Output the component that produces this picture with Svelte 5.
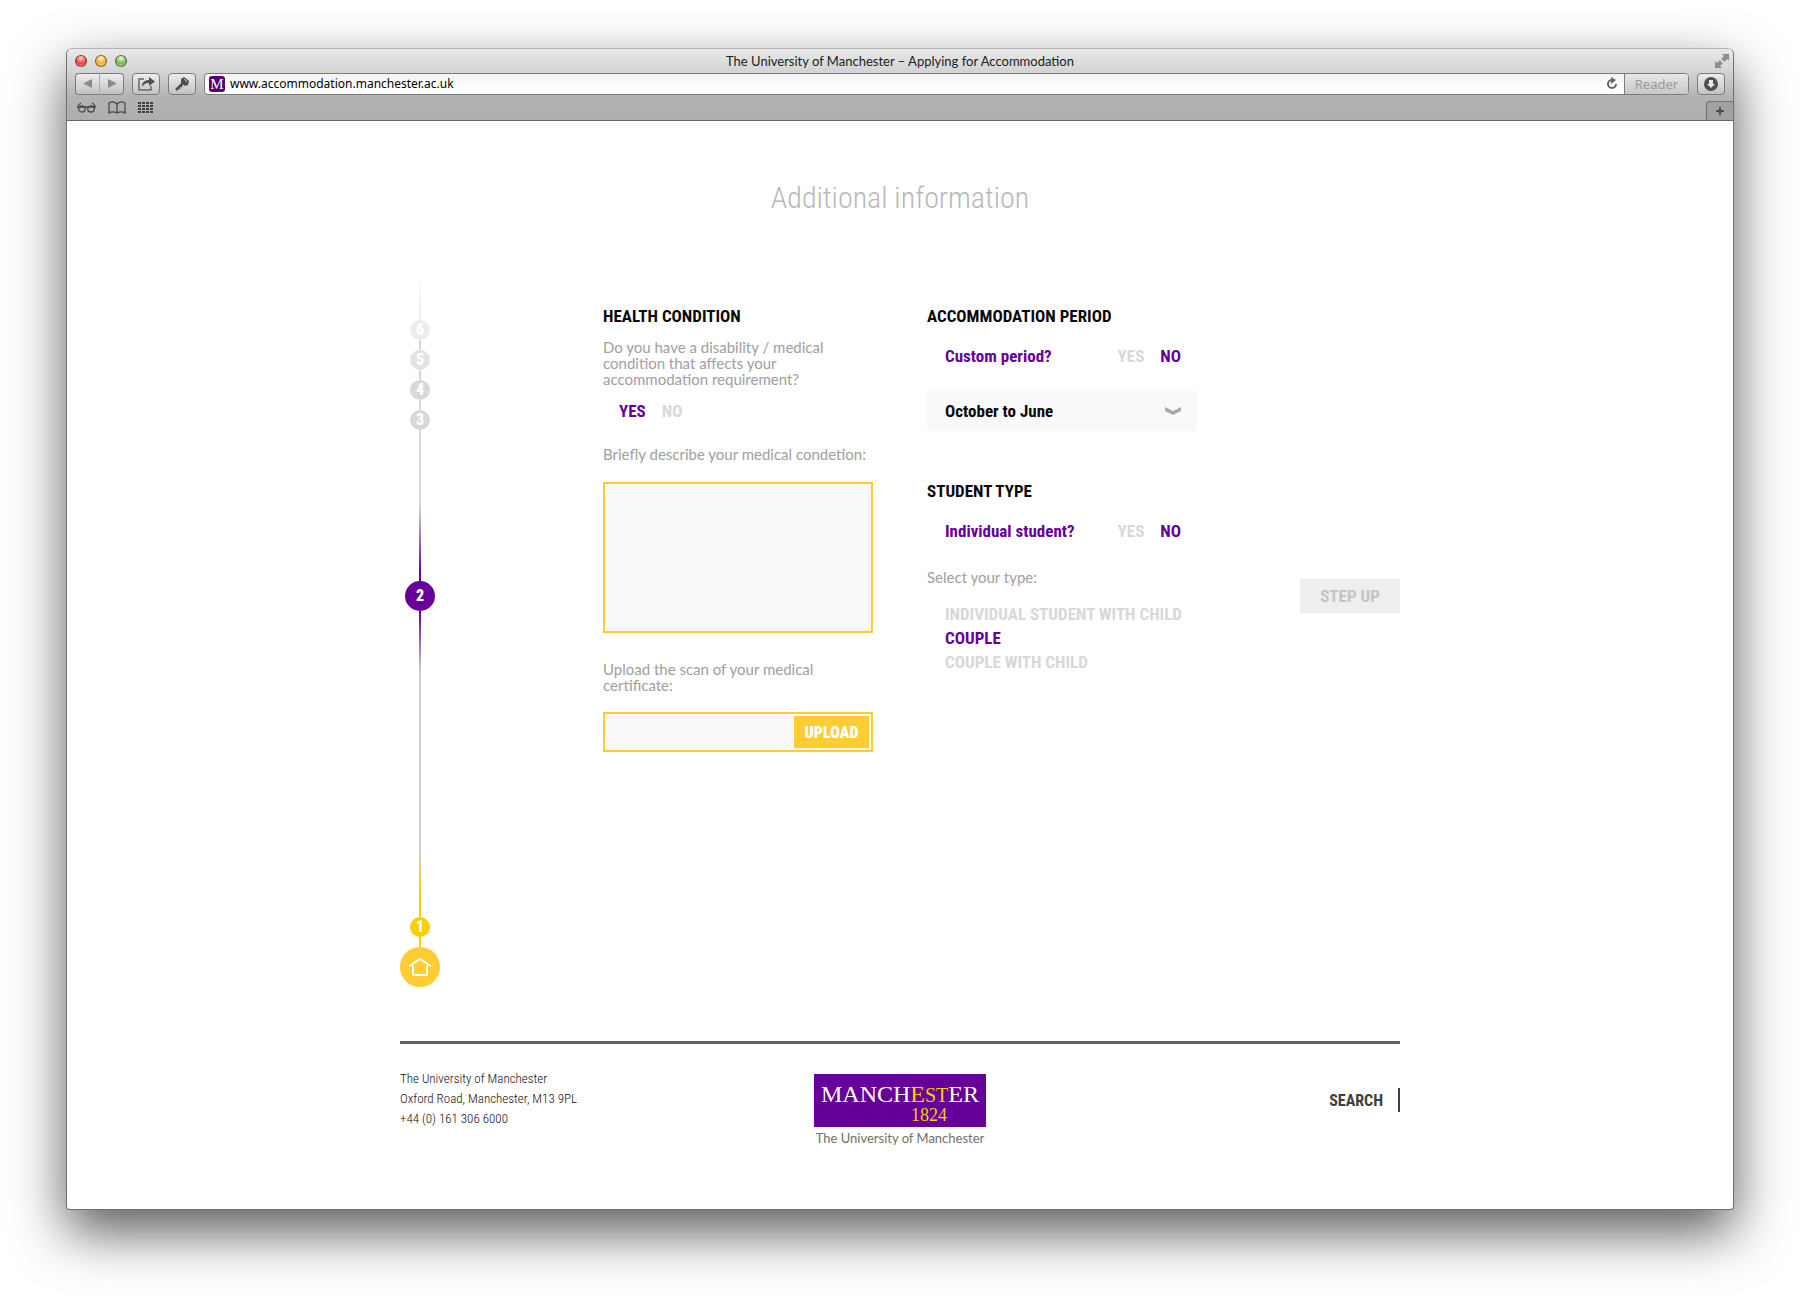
<script lang="ts">
	/**
	 * Accommodation application, step 2: additional information
	 * Shown inside a desktop browser window
	 */

	let address = $state('www.accommodation.manchester.ac.uk');
	let disability = $state('yes');
	let customPeriod = $state('no');
	let individual = $state('no');
	let studentType = $state('couple');
	let period = $state('October to June');

	const upcoming = [6, 5, 4, 3];

	const studentTypes = [
		{ value: 'single-child', label: 'INDIVIDUAL STUDENT WITH CHILD' },
		{ value: 'couple', label: 'COUPLE' },
		{ value: 'couple-child', label: 'COUPLE WITH CHILD' }
	];
</script>

<div class="window">
	<header class="chrome">
		<div class="titlebar">
			<div class="lights">
				<button class="light" data-kind="close" aria-label="Close"></button>
				<button class="light" data-kind="minimise" aria-label="Minimise"></button>
				<button class="light" data-kind="zoom" aria-label="Zoom"></button>
			</div>
			<span class="window-title">The University of Manchester – Applying for Accommodation</span>
			<button class="plain fullscreen" aria-label="Full screen">
				<svg width="16" height="16" viewBox="0 0 16 16" fill="#8c8c8c">
					<path d="M8 1h7v7l-2-2-3 3-3-3 3-3zM1 8l2 2 3-3 3 3-3 3 2 2H1z" />
					<path d="M5 5l6 6" stroke="#dedede" stroke-width="2" />
				</svg>
			</button>
		</div>

		<div class="toolbar">
			<div class="history">
				<button class="tool" aria-label="Back">
					<svg width="10" height="10" viewBox="0 0 10 10"><path d="M9 0v9L0 4.500z" fill="#8b8b8b" /></svg>
				</button>
				<button class="tool" aria-label="Forward">
					<svg width="10" height="10" viewBox="0 0 10 10"><path d="M1 0v9l9-4.500z" fill="#8b8b8b" /></svg>
				</button>
			</div>
			<button class="tool" aria-label="Share">
				<svg width="17" height="14" viewBox="0 0 17 14">
					<path d="M6 2H1v11h12V9" fill="none" stroke="#666" stroke-width="1.500" />
					<path d="M4 10c0-4 2-7 7-7V0l6 4.500L11 9V6c-4 0-5 1.500-7 4z" fill="#505050" />
				</svg>
			</button>
			<button class="tool" aria-label="Passwords">
				<svg width="16" height="16" viewBox="0 0 16 16">
					<path d="M9 7l-7 7" stroke="#505050" stroke-width="2.500" />
					<path d="M4 11l2 2M6 9l2 2" stroke="#505050" stroke-width="1.500" />
					<path d="M7 3l3-2 5 4-1 4-3 1-4-3z" fill="#505050" />
					<path d="M10 3l3 3" stroke="#ccc" />
				</svg>
			</button>
			<div class="address">
				<span class="favicon" aria-hidden="true">M</span>
				<input type="text" aria-label="Address" bind:value={address} />
				<button class="plain" aria-label="Reload">
					<svg width="12" height="14" viewBox="0 0 12 14">
						<path d="M10 7a4 4 0 1 1-4-4" fill="none" stroke="#666" stroke-width="2" />
						<path d="M5 0l5 3-5 4z" fill="#666" />
					</svg>
				</button>
				<button class="reader" disabled>Reader</button>
			</div>
			<button class="tool" aria-label="Downloads">
				<svg width="14" height="14" viewBox="0 0 14 14">
					<circle cx="7" cy="7" r="7" fill="#505050" />
					<path d="M5 3h4v4h2l-4 4-4-4h2z" fill="#e8e8e8" />
				</svg>
			</button>
		</div>

		<div class="bookmarks">
			<button class="plain" aria-label="Reading list">
				<svg width="19" height="11" viewBox="0 0 19 11" fill="none" stroke="#484848" stroke-width="1.300">
					<ellipse cx="5" cy="7" rx="3.300" ry="3" />
					<ellipse cx="14" cy="7" rx="3.300" ry="3" />
					<path d="M0 5h19M1 5c0-2 1-3 3-4M18 5c0-2-1-3-3-4" />
				</svg>
			</button>
			<button class="plain" aria-label="Bookmarks">
				<svg width="18" height="13" viewBox="0 0 18 13" fill="none" stroke="#484848" stroke-width="1.300">
					<path d="M9 3C7 1 4 0 1 2v10c3-2 6-1 8 0 2-1 5-2 8 0V2c-3-2-6-1-8 1zM9 3v9" />
				</svg>
			</button>
			<button class="plain" aria-label="Top sites">
				<svg width="15" height="11" viewBox="0 0 15 11" stroke="#404040" stroke-width="2" stroke-dasharray="3 1">
					<path d="M0 1h15M0 4h15M0 7h15M0 10h15" />
				</svg>
			</button>
			<button class="new-tab" aria-label="New tab">
				<svg width="8" height="8" viewBox="0 0 8 8"><path d="M4 0v8M0 4h8" stroke="#505050" stroke-width="2" /></svg>
			</button>
		</div>
	</header>

	<main class="page">
		<h1>Additional information</h1>

		<div class="columns">
			<nav class="timeline" aria-label="Steps">
				<span class="line line--fade"></span>
				{#each upcoming as step}
					<a href="#step-{step}" class="step" data-step={step}>{step}</a>
					{#if step !== 3}
						<span class="line line--short"></span>
					{/if}
				{/each}
				<span class="line line--before"></span>
				<a href="#step-2" class="step step--current" aria-current="step">2</a>
				<span class="line line--after"></span>
				<a href="#step-1" class="step step--done">1</a>
				<span class="line line--short line--done"></span>
				<a href="#home" class="step step--home" aria-label="Home">
					<svg width="24" height="20" viewBox="0 0 24 20" fill="none" stroke="#fff" stroke-width="2">
						<path d="M2 8.500L12 2l10 6.500" stroke-linecap="round" />
						<path d="M5 8.500V18h14V8.500" stroke-linejoin="round" />
					</svg>
				</a>
			</nav>

			<section class="column">
				<h2>HEALTH CONDITION</h2>
				<fieldset class="question">
					<legend>Do you have a disability / medical condition that affects your accommodation requirement?</legend>
					<div class="answers answers--indent">
						<label><input type="radio" name="disability" value="yes" bind:group={disability} />YES</label>
						<label><input type="radio" name="disability" value="no" bind:group={disability} />NO</label>
					</div>
				</fieldset>

				<label class="hint" for="condition">Briefly describe your medical condetion:</label>
				<textarea id="condition"></textarea>

				<label class="hint hint--wrap" for="certificate">Upload the scan of your medical certificate:</label>
				<div class="upload">
					<input type="text" id="certificate" />
					<button>UPLOAD</button>
				</div>
			</section>

			<section class="column">
				<h2>ACCOMMODATION PERIOD</h2>
				<div class="row" role="radiogroup" aria-labelledby="period-label">
					<span id="period-label">Custom period?</span>
					<div class="answers">
						<label><input type="radio" name="custom" value="yes" bind:group={customPeriod} />YES</label>
						<label><input type="radio" name="custom" value="no" bind:group={customPeriod} />NO</label>
					</div>
				</div>
				<div class="select">
					<select aria-label="Period" bind:value={period}>
						<option>October to June</option>
					</select>
					<svg width="16" height="8" viewBox="0 0 16 8"><path d="M0 0l8 4 8-4v4L8 8 0 4z" fill="#a8a8a8" /></svg>
				</div>

				<h2>STUDENT TYPE</h2>
				<div class="row" role="radiogroup" aria-labelledby="student-label">
					<span id="student-label">Individual student?</span>
					<div class="answers">
						<label><input type="radio" name="individual" value="yes" bind:group={individual} />YES</label>
						<label><input type="radio" name="individual" value="no" bind:group={individual} />NO</label>
					</div>
				</div>
				<fieldset class="types">
					<legend>Select your type:</legend>
					{#each studentTypes as type}
						<label><input type="radio" name="type" value={type.value} bind:group={studentType} />{type.label}</label>
					{/each}
				</fieldset>
			</section>

			<button class="step-up">STEP UP</button>
		</div>

		<footer>
			<address>
				The University of Manchester<br />
				Oxford Road, Manchester, M13 9PL<br />
				+44 (0) 161 306 6000
			</address>
			<a class="brand" href="#manchester">
				<span class="brand__mark">
					<span class="brand__name">MANCH<b>E<small>ST</small></b>ER</span>
					<span class="brand__year">1824</span>
				</span>
				<span class="brand__text">The University of Manchester</span>
			</a>
			<input class="search" type="text" placeholder="SEARCH" aria-label="Search" />
		</footer>
	</main>
</div>

<style>
	:global(body) {
		background: #fff;
		--cond: 'Roboto Condensed', 'Liberation Sans Narrow', 'Liberation Sans', sans-serif;
		--text: Lato, 'Open Sans', sans-serif;
		--purple: #609;
		--yellow: #fc3;
		--muted: #d8d8d8;
	}

	.window {
		margin: 48px 66px 91px;
		border: 1px solid #707070;
		border-top-color: #b4b4b4;
		border-radius: 6px 6px 4px 4px;
		box-shadow: 0 22px 54px rgba(0, 0, 0, 0.65);
		background: #fff;
		overflow: hidden;
		font-family: var(--cond);
	}

	button,
	input,
	select,
	textarea {
		box-sizing: border-box;
		margin: 0;
		padding: 0;
		border: 0;
		border-radius: 0;
		background: none;
		font: inherit;
		color: inherit;
		outline: none;
	}

	a {
		color: inherit;
		text-decoration: none;
	}

	svg {
		display: block;
	}

	/* Browser chrome */
	.chrome {
		border-bottom: 1px solid #666;
		background: linear-gradient(#e9e9e9, #d2d2d2 24px, #b3b3b3 48px, #adadad);
	}

	.titlebar {
		display: grid;
		grid-template-columns: 1fr auto 1fr;
		align-items: center;
		height: 24px;
		padding: 0 8px;
	}

	.lights {
		display: flex;
		gap: 8px;
	}

	.light {
		width: 12px;
		height: 12px;
		border: 1px solid rgba(60, 30, 20, 0.6);
		border-radius: 50%;
	}

	.light[data-kind='close'] {
		background: radial-gradient(circle at 50% 20%, #fcc, #e8453f 60%, #f99);
	}

	.light[data-kind='minimise'] {
		background: radial-gradient(circle at 50% 20%, #fff0c0, #f0ac38 60%, #ffe08a);
	}

	.light[data-kind='zoom'] {
		background: radial-gradient(circle at 50% 20%, #e4ffd0, #72b84c 60%, #c4f09a);
	}

	.window-title {
		font-family: var(--text);
		font-size: 13px;
		color: #222;
	}

	.fullscreen {
		justify-self: end;
		margin-right: -5px;
	}

	.plain {
		display: grid;
		place-items: center;
	}

	.toolbar {
		display: flex;
		gap: 8px;
		padding: 0 8px;
	}

	.tool {
		display: grid;
		place-items: center;
		width: 28px;
		height: 22px;
		border: 1px solid #7c7c7c;
		border-radius: 4px;
		background: linear-gradient(#ededed, #c2c2c2);
	}

	.history {
		display: flex;
	}

	.history .tool {
		width: 24px;
	}

	.history .tool:first-child {
		border-right: 0;
		border-radius: 4px 0 0 4px;
	}

	.history .tool:last-child {
		width: 25px;
		border-left-color: #aaa;
		border-radius: 0 4px 4px 0;
	}

	.address {
		display: flex;
		flex: 1;
		align-items: center;
		box-sizing: border-box;
		height: 22px;
		padding-left: 4px;
		border: 1px solid #7c7c7c;
		border-radius: 4px;
		background: linear-gradient(#f2f2f2, #fff 12px);
		overflow: hidden;
	}

	.favicon {
		width: 16px;
		border-radius: 3px;
		background: #507;
		color: #fff;
		font: 15px/16px 'Liberation Serif', serif;
		text-align: center;
	}

	.address input {
		flex: 1;
		padding-left: 5px;
		font-family: 'Noto Sans', sans-serif;
		font-size: 12px;
		line-height: 20px;
		color: #000;
	}

	.reader {
		width: 64px;
		height: 22px;
		margin-left: 6px;
		border-left: 1px solid #7c7c7c;
		background: linear-gradient(#e9e9e9, #c6c6c6);
		color: #999;
		font-family: 'Noto Sans', sans-serif;
		font-size: 13px;
	}

	.bookmarks {
		display: flex;
		align-items: center;
		gap: 12px;
		height: 25px;
		padding-left: 10px;
	}

	.new-tab {
		display: grid;
		place-items: center;
		align-self: end;
		width: 27px;
		height: 19px;
		margin-left: auto;
		border: 1px solid #707070;
		border-width: 1px 0 0 1px;
		border-radius: 4px 0 0;
		background: #a2a2a2;
	}

	/* Page */
	.page {
		max-width: 1000px;
		margin: 0 auto;
	}

	h1 {
		margin: 0;
		padding-top: 55px;
		font-size: 30px;
		font-weight: 300;
		line-height: 44px;
		text-align: center;
		color: #b8b8b8;
	}

	.columns {
		display: grid;
		grid-template-columns: 149px 270px 270px 1fr;
		column-gap: 54px;
		align-items: start;
		padding-top: 50px;
	}

	.column {
		padding-top: 36px;
	}

	h2 {
		margin: 0;
		font-size: 17px;
		font-weight: 700;
		line-height: 20px;
		color: #0a0a0a;
	}

	/* Timeline */
	.timeline {
		display: flex;
		flex-direction: column;
		align-items: center;
		width: 40px;
	}

	.line {
		width: 2px;
		background: #d8d8d8;
	}

	.line--fade {
		height: 50px;
		background: linear-gradient(#fff, #ececec);
	}

	.line--short {
		height: 10px;
	}

	.line--before {
		height: 151px;
		background: linear-gradient(#d8d8d8 50%, #609 95%);
	}

	.line--after {
		height: 306px;
		background: linear-gradient(#609, #d0d0d0 20%, #d0d0d0 78%, #fc0 93%);
	}

	.line--done {
		background: #fc0;
	}

	.step {
		display: grid;
		place-items: center;
		width: 20px;
		height: 20px;
		border-radius: 50%;
		background: #d8d8d8;
		color: #fff;
		font-size: 16px;
		font-weight: 900;
		line-height: 20px;
	}

	.step[data-step='6'] {
		background: #ececec;
	}

	.step[data-step='5'] {
		background: #e2e2e2;
	}

	.step--current {
		width: 30px;
		height: 30px;
		background: var(--purple);
	}

	.step--done {
		background: #fc0;
	}

	.step--home {
		width: 40px;
		height: 40px;
		background: var(--yellow);
	}

	/* Form */
	fieldset {
		min-width: 0;
		margin: 0;
		padding: 0;
		border: 0;
	}

	legend,
	.hint {
		display: block;
		padding: 0;
		font-family: var(--text);
		font-size: 15px;
		line-height: 16px;
		color: #a0a0a0;
	}

	.question {
		margin-top: 13px;
	}

	.question legend {
		width: 230px;
	}

	.answers {
		display: flex;
		gap: 16px;
	}

	.answers--indent {
		padding: 14px 0 0 16px;
	}

	.answers label,
	.types label {
		font-size: 17px;
		font-weight: 700;
		line-height: 20px;
		color: var(--muted);
		cursor: pointer;
	}

	.answers label:has(:checked),
	.types label:has(:checked) {
		color: var(--purple);
	}

	input[type='radio'] {
		position: absolute;
		opacity: 0;
		pointer-events: none;
	}

	.question + .hint {
		margin-top: 25px;
	}

	textarea {
		display: block;
		width: 100%;
		height: 151px;
		margin-top: 20px;
		padding: 8px;
		border: 2px solid var(--yellow);
		background: #f9f9f9;
		resize: none;
	}

	.hint--wrap {
		width: 230px;
		margin-top: 28px;
	}

	.upload {
		display: flex;
		box-sizing: border-box;
		height: 40px;
		margin-top: 19px;
		padding: 2px;
		border: 2px solid var(--yellow);
		background: #f9f9f9;
	}

	.upload input {
		flex: 1;
		min-width: 0;
	}

	.upload button {
		width: 75px;
		background: var(--yellow);
		color: #fff;
		font-size: 16px;
		font-weight: 900;
	}

	.row {
		display: flex;
		justify-content: space-between;
		margin-top: 20px;
		padding: 0 16px 0 18px;
		font-size: 17px;
		font-weight: 700;
		line-height: 20px;
		color: var(--purple);
	}

	.select {
		display: grid;
		align-items: center;
		margin: 25px 0 50px;
		background: #f9f9f9;
	}

	.select select,
	.select svg {
		grid-area: 1 / 1;
	}

	.select select {
		height: 40px;
		padding-left: 18px;
		appearance: none;
		font-size: 17px;
		font-weight: 700;
		color: #0a0a0a;
	}

	.select svg {
		justify-self: end;
		margin-right: 16px;
		pointer-events: none;
	}

	.types {
		display: flex;
		flex-direction: column;
		margin-top: 28px;
	}

	.types legend {
		margin-bottom: 17px;
	}

	.types label {
		padding-left: 18px;
		line-height: 24px;
	}

	.step-up {
		justify-self: end;
		width: 100px;
		height: 34px;
		margin-top: 309px;
		background: #eee;
		color: #c4c4c4;
		font-size: 17px;
		font-weight: 700;
	}

	/* Footer */
	footer {
		display: grid;
		grid-template-columns: 1fr auto 1fr;
		align-items: start;
		margin-top: 54px;
		padding: 25px 0 60px;
		border-top: 3px solid #606060;
		color: #404040;
	}

	address {
		font-size: 13px;
		font-style: normal;
		font-weight: 300;
		line-height: 20px;
		color: #111;
	}

	.brand {
		display: block;
		margin-top: 5px;
	}

	.brand__mark {
		display: flex;
		flex-direction: column;
		width: 172px;
		height: 53px;
		background: var(--purple);
		color: #fff;
		font-family: 'Liberation Serif', serif;
	}

	.brand__name {
		padding-top: 8px;
		font-size: 24px;
		line-height: 24px;
		text-align: center;
	}

	.brand__name b,
	.brand__year {
		font-weight: 400;
		color: #fc0;
	}

	.brand__name small {
		font-size: 20px;
	}

	.brand__year {
		padding-left: 97px;
		font-size: 18px;
		line-height: 16px;
	}

	.brand__text {
		display: block;
		font-family: var(--text);
		font-size: 13px;
		line-height: 22px;
		text-align: center;
		color: #707070;
	}

	.search {
		justify-self: end;
		width: 100px;
		height: 24px;
		margin-top: 19px;
		padding-right: 15px;
		border-right: 2px solid #404040;
		font-size: 16px;
		font-weight: 700;
		text-align: right;
	}

	.search::placeholder {
		color: #404040;
		opacity: 1;
	}
</style>
